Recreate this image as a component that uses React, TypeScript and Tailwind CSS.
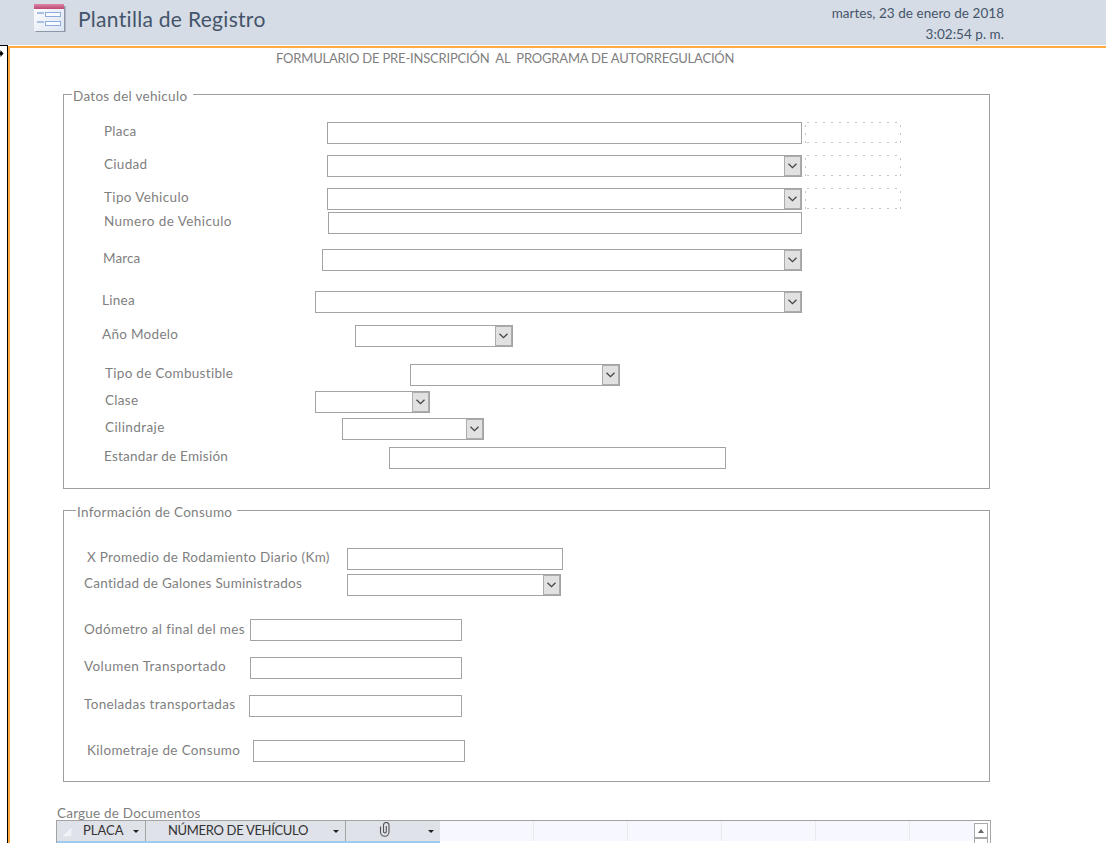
type FieldProps = { label: string; labelClass: string; fieldClass: string; rowClass: string; select?: boolean; ghost?: boolean };

function DropButton() {
  return (
    <span className="flex h-full w-[17px] shrink-0 items-center border border-[#acacac] bg-[#e1e1e1] pl-[3px]">
      <svg width="9" height="6" viewBox="0 0 9 6" fill="none" stroke="#444" strokeWidth="1.3">
        <path d="M0.5 0.8 L4.5 4.6 L8.5 0.8" />
      </svg>
    </span>
  );
}

function Ghost() {
  return (
    <svg className="ml-[3px] shrink-0 self-start" width="96" height="21" viewBox="0 0 96 21" fill="none" stroke="#c6c6c6" strokeWidth="1" shapeRendering="crispEdges">
      <path d="M2 .5H95M2 20.5H95" strokeDasharray="2 6" />
      <path d="M.5 3V21M95.5 3V21" strokeDasharray="2 6" />
    </svg>
  );
}

function Field({ label, labelClass, fieldClass, rowClass, select, ghost }: FieldProps) {
  return (
    <div className={`flex h-[22px] ${rowClass}`}>
      <label className={`shrink-0 whitespace-nowrap leading-[19px] ${labelClass}`}>{label}</label>
      <div className={`flex h-[22px] shrink-0 justify-end border border-[#a3a3a3] bg-white ${fieldClass}`}>{select && <DropButton />}</div>
      {ghost && <Ghost />}
    </div>
  );
}

const vehicle: FieldProps[] = [
  { label: "Placa", rowClass: "mt-[27px] pl-10", labelClass: "w-[223px]", fieldClass: "w-[475px]", ghost: true },
  { label: "Ciudad", rowClass: "mt-[11px] pl-10", labelClass: "w-[223px]", fieldClass: "w-[475px]", select: true, ghost: true },
  { label: "Tipo Vehiculo", rowClass: "mt-[11px] pl-10", labelClass: "w-[223px] tracking-[0.37px]", fieldClass: "w-[475px]", select: true, ghost: true },
  { label: "Numero de Vehiculo", rowClass: "mt-0.5 pl-10", labelClass: "w-[224px] tracking-[0.43px]", fieldClass: "w-[474px]" },
  { label: "Marca", rowClass: "mt-[15px] pl-[39px]", labelClass: "w-[219px] tracking-[0.1px]", fieldClass: "w-[480px]", select: true },
  { label: "Linea", rowClass: "mt-5 pl-[38px]", labelClass: "w-[213px]", fieldClass: "w-[487px]", select: true },
  { label: "Año Modelo", rowClass: "mt-3 pl-[38px]", labelClass: "w-[253px]", fieldClass: "w-[158px]", select: true },
  { label: "Tipo de Combustible", rowClass: "mt-[17px] pl-[41px]", labelClass: "w-[305px]", fieldClass: "w-[210px]", select: true },
  { label: "Clase", rowClass: "mt-[5px] pl-[41px]", labelClass: "w-[210px]", fieldClass: "w-[115px]", select: true },
  { label: "Cilindraje", rowClass: "mt-[5px] pl-[41px]", labelClass: "w-[237px] tracking-[0.4px]", fieldClass: "w-[142px]", select: true },
  { label: "Estandar de Emisión", rowClass: "mt-[7px] pl-10", labelClass: "w-[285px] tracking-[0.25px]", fieldClass: "w-[337px]" },
];

const usage: FieldProps[] = [
  { label: "X Promedio de Rodamiento Diario (Km)", rowClass: "mt-[37px] pl-[23px]", labelClass: "w-[260px]", fieldClass: "w-[216px]" },
  { label: "Cantidad de Galones Suministrados", rowClass: "mt-1 pl-5", labelClass: "w-[263px] tracking-[0.27px]", fieldClass: "w-[214px]", select: true },
  { label: "Odómetro al final del mes", rowClass: "mt-[23px] pl-5", labelClass: "w-[166px] pt-px tracking-[0.34px]", fieldClass: "w-[212px]" },
  { label: "Volumen Transportado", rowClass: "mt-4 pl-5", labelClass: "w-[166px] tracking-[0.42px]", fieldClass: "w-[212px]" },
  { label: "Toneladas transportadas", rowClass: "mt-4 pl-5", labelClass: "w-[165px] tracking-[0.34px]", fieldClass: "w-[213px]" },
  { label: "Kilometraje de Consumo", rowClass: "mt-[23px] pl-[23px]", labelClass: "w-[166px] pt-px tracking-[0.34px]", fieldClass: "w-[212px]" },
];

function Group({ title, titleClass, className, fields }: { title: string; titleClass: string; className: string; fields: FieldProps[] }) {
  return (
    <section className={`relative ml-[53px] w-[927px] border border-[#9f9f9f] ${className}`}>
      <h2 className={`absolute -top-[9px] whitespace-nowrap bg-white leading-[20px] ${titleClass}`}>{title}</h2>
      {fields.map((f) => (
        <Field key={f.label} {...f} />
      ))}
    </section>
  );
}

function Caret() {
  return (
    <svg className="mt-px shrink-0" width="6" height="3" viewBox="0 0 6 3">
      <path d="M0 0H6L3 3Z" fill="#222" />
    </svg>
  );
}

export default function App() {
  return (
    <div className="flex h-[843px] w-[1106px] flex-col overflow-hidden bg-white font-['Lato','Carlito',sans-serif] text-[13.5px] tracking-[0.3px] text-[#7f7f7f]">
      <header className="flex h-[45px] shrink-0 justify-between bg-[#d6dce5] pr-[102px] text-[#44546a]">
        <div className="flex pl-[33px]">
          <svg className="mt-[3px]" width="34" height="31" viewBox="0 0 34 31">
            <defs>
              <linearGradient id="bar" x1="0" y1="0" x2="0" y2="1">
                <stop offset="0" stopColor="#dc87a5" />
                <stop offset="1" stopColor="#bd4573" />
              </linearGradient>
              <linearGradient id="sheet" x1="0" y1="0" x2="1" y2="1">
                <stop offset="0" stopColor="#ffffff" />
                <stop offset="1" stopColor="#dbe5f3" />
              </linearGradient>
            </defs>
            <rect x="2.500" y="3" width="30" height="26" fill="#75808f" opacity=".75" />
            <rect x="1" y="1" width="30" height="27" fill="url(#sheet)" />
            <rect x="1" y="1" width="30" height="5" fill="url(#bar)" />
            <path d="M4 10H11M4 19H11" stroke="#a9bfe4" strokeWidth="2" />
            <rect x="12.500" y="9.500" width="15" height="4" fill="#f7faff" stroke="#8faadc" />
            <rect x="12.500" y="18.500" width="15" height="4" fill="#f7faff" stroke="#8faadc" />
          </svg>
          <h1 className="ml-[11px] text-[21px] leading-[37px] tracking-[0.3px]">Plantilla de Registro</h1>
        </div>
        <div className="pt-[3px] text-right leading-[21px] tracking-[0.04px]">
          <p>martes, 23 de enero de 2018</p>
          <p>3:02:54 p. m.</p>
        </div>
      </header>
      <div className="flex min-h-0 flex-1">
        <aside className="w-2 shrink-0 border-t border-r border-black">
          <svg className="mt-1" width="4" height="7" viewBox="0 0 4 7">
            <path d="M0 2H.5V0L3.500 3.500L.5 7V5H0Z" fill="#000" />
          </svg>
        </aside>
        <main className="mt-px flex min-w-0 flex-1 flex-col border-t-2 border-l-2 border-[#ffa940]">
          <p className="ml-[266px] h-[46px] shrink-0 whitespace-pre text-[13px] leading-[21px] tracking-[-0.19px]">FORMULARIO DE PRE-INSCRIPCIÓN  AL  PROGRAMA DE AUTORREGULACIÓN</p>
          <Group title="Datos del vehiculo" titleClass="left-[8px] w-[121px] pl-px" className="h-[395px] shrink-0" fields={vehicle} />
          <Group title="Información de Consumo" titleClass="left-[12px] w-[161px] pl-px" className="mt-[21px] h-[272px] shrink-0" fields={usage} />
          <h2 className="ml-[47px] mt-[21px] h-[17px] shrink-0 leading-[20px] tracking-[0.2px]">Cargue de Documentos</h2>
          <div className="ml-[46px] flex h-[23px] w-[935px] shrink-0 border-t border-r border-l border-[#a3a3a3] text-[13px] tracking-[-0.32px] text-[#333]">
            <div className="flex h-[22px] w-[383px] border-b-2 border-[#9ecbf0] bg-[#dfe2e8] leading-[19px]">
              <div className="flex w-[89px] items-center border-r border-[#a3a3a3] pr-[6px]">
                <svg className="ml-1" width="11" height="11" viewBox="0 0 11 11">
                  <path d="M11 0V11H0Z" fill="#eef1f5" stroke="#c9cfd8" strokeWidth=".5" />
                </svg>
                <span className="-mt-0.5 ml-[11px] flex-1 tracking-[0px]">PLACA</span>
                <Caret />
              </div>
              <div className="flex w-[200px] items-center border-r border-[#a3a3a3] pr-[6px]">
                <span className="-mt-0.5 ml-[22px] flex-1">NÚMERO DE VEHÍCULO</span>
                <Caret />
              </div>
              <div className="flex w-[94px] items-center pr-[6px]">
                <svg className="mr-auto -mt-[3px] ml-[33px]" width="12" height="15" viewBox="0 0 12 15" fill="none" stroke="#555" strokeWidth="1.1">
                  <path d="M1.500 4.500V10A4 4 0 0 0 10 10V3.200A2.600 2.600 0 0 0 4.500 3.200V9.500A1.300 1.300 0 0 0 7.300 9.500V4" />
                </svg>
                <Caret />
              </div>
            </div>
            <div className="flex h-[20px] w-[534px] bg-[#f7f7ff]">
              <span className="w-[94px] border-r border-[#e9e9f0]" />
              <span className="w-[94px] border-r border-[#e9e9f0]" />
              <span className="w-[94px] border-r border-[#e9e9f0]" />
              <span className="w-[94px] border-r border-[#e9e9f0]" />
              <span className="w-[94px] border-r border-[#e9e9f0]" />
            </div>
            <div className="mt-[2px] flex w-[14px] flex-col">
              <span className="flex h-[15px] items-center justify-center border border-[#a9a9a9]">
                <svg width="6" height="4" viewBox="0 0 6 4"><path d="M3 0L6 4H0Z" fill="#666" /></svg>
              </span>
              <span className="h-[5px] border border-b-0 border-[#a9a9a9]" />
            </div>
          </div>
        </main>
      </div>
    </div>
  );
}
